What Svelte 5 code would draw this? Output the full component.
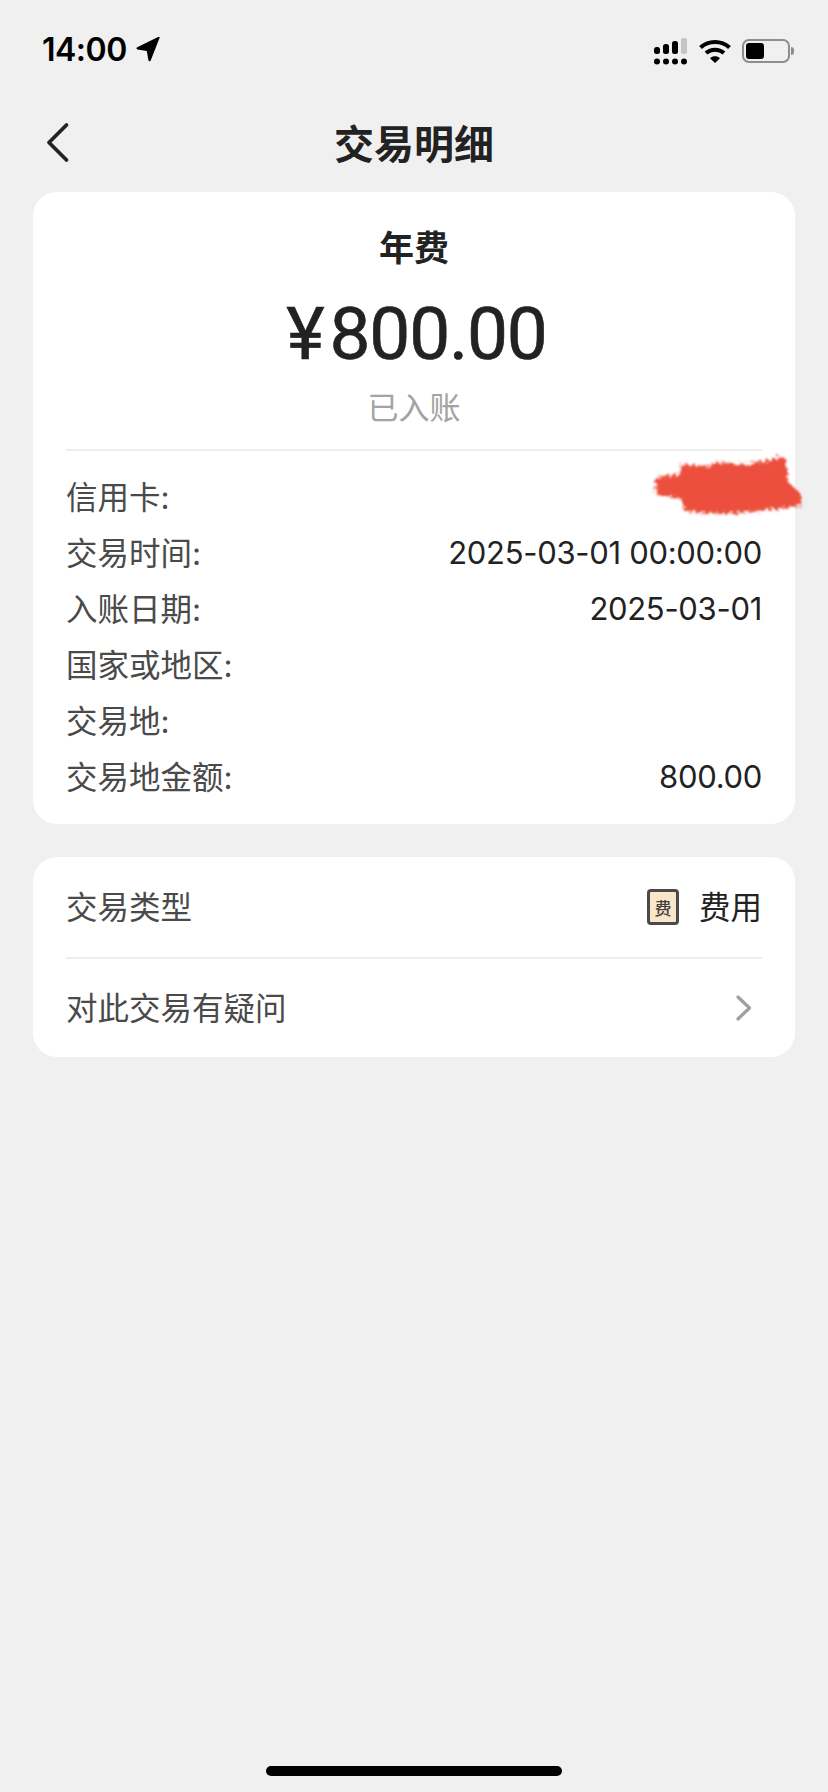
<script>
  const rows = [
    { label: "信用卡:", value: "", masked: true },
    { label: "交易时间:", value: "2025-03-01 00:00:00" },
    { label: "入账日期:", value: "2025-03-01" },
    { label: "国家或地区:", value: "" },
    { label: "交易地:", value: "" },
    { label: "交易地金额:", value: "800.00" },
  ];
</script>

<div class="page">
  <div class="status">
    <div class="time">
      <span>14:00</span>
      <svg class="loc" width="25" height="25" viewBox="0 0 25 25">
        <path d="M23.600.700 14.700 23.400c-.5 1.200-2.100 1-2.300-.2L10.800 14 1.500 12.500C.300 12.300.100 10.800 1.200 10.200L22.300-.1c.9-.4 1.700.000 1.300.800z" fill="#000" />
      </svg>
    </div>
    <div class="status-right">
      <svg width="34" height="27" viewBox="0 0 34 27">
        <rect x="0" y="9" width="6" height="7" rx="2.500" fill="#000" />
        <rect x="9" y="6" width="6" height="10" rx="2.500" fill="#000" />
        <rect x="18" y="3" width="6" height="13" rx="2.500" fill="#000" />
        <rect x="27" y="0" width="6" height="16" rx="2" fill="#c4c4c4" />
        <circle cx="3" cy="23.500" r="3" fill="#000" />
        <circle cx="12" cy="23.500" r="3" fill="#000" />
        <circle cx="21" cy="23.500" r="3" fill="#000" />
        <circle cx="30" cy="23.500" r="3" fill="#000" />
      </svg>
      <svg class="wifi" width="32" height="24" viewBox="0 0 32 24">
        <path d="M1.500 8.500C9.500 1 22.500 1 30.500 8.500" fill="none" stroke="#000" stroke-width="4" />
        <path d="M7 14c5-4.500 13-4.500 18 0" fill="none" stroke="#000" stroke-width="4" />
        <path d="M11 19.200c3-2.500 7-2.500 10 0L16 24z" fill="#000" />
      </svg>
      <div class="battery">
        <div class="battery-body"><div class="battery-fill"></div></div>
        <div class="battery-tip"></div>
      </div>
    </div>
  </div>

  <header class="nav">
    <svg class="back" width="24" height="42" viewBox="0 0 24 42">
      <path d="M20.500 3 3 20.500 20.500 38" fill="none" stroke="#222" stroke-width="3.800" stroke-linecap="round" stroke-linejoin="round" />
    </svg>
    <h1>交易明细</h1>
  </header>

  <section class="card summary">
    <div class="kind">年费</div>
    <div class="amount"><span class="yen">¥</span>800.00</div>
    <div class="state">已入账</div>
    <div class="rows">
      {#each rows as row}
        <div class="row">
          <span class="label">{row.label}</span>
          <span class="value">{row.value}</span>
          {#if row.masked}
            <svg class="scribble" width="160" height="80" viewBox="0 0 160 80">
              <defs>
                <filter id="rough" x="-10%" y="-20%" width="120%" height="140%">
                  <feTurbulence type="fractalNoise" baseFrequency="0.3" numOctaves="3" seed="4" />
                  <feDisplacementMap in="SourceGraphic" scale="10" />
                  <feGaussianBlur stdDeviation="0.8" />
                </filter>
              </defs>
              <path filter="url(#rough)" d="M6 27 L29 25 L33 14 L58 16 L70 12 L90 15 L112 12 L130 7 L137 9 L139 32 L151 43 L152 56 L120 60 L76 64 L36 62 L33 48 L7 45Z" fill="#ec4f3e" />
            </svg>
          {/if}
        </div>
      {/each}
    </div>
  </section>

  <section class="card actions">
    <div class="action">
      <span class="label">交易类型</span>
      <div class="type">
        <span class="type-icon">费</span>
        <span class="type-name">费用</span>
      </div>
    </div>
    <div class="action last">
      <span class="label">对此交易有疑问</span>
      <svg width="16" height="26" viewBox="0 0 16 26">
        <path d="M2 2l11.500 11L2 24" fill="none" stroke="#a0a0a0" stroke-width="3.200" stroke-linecap="round" stroke-linejoin="round" />
      </svg>
    </div>
  </section>

  <div class="spacer">
    <div class="home"></div>
  </div>
</div>

<style>
  :global(body) {
    margin: 0;
    background: #f0f0f0;
  }

  .page {
    width: 828px;
    height: 1792px;
    display: flex;
    flex-direction: column;
    background: #f0f0f0;
    color: #222;
    font-family: Inter, "Noto Sans CJK SC", sans-serif;
    overflow: hidden;
  }

  .status {
    height: 98px;
    display: flex;
    justify-content: space-between;
    align-items: center;
    padding: 0 34px 0 42px;
    flex-shrink: 0;
  }
  .time {
    display: flex;
    align-items: center;
    gap: 9px;
    font-size: 32px;
    font-weight: 600;
    color: #000;
    font-family: Inter, sans-serif;
    letter-spacing: -0.5px;
  }
  .status-right {
    display: flex;
    align-items: center;
    gap: 11px;
    margin-top: 4px;
  }
  .battery {
    display: flex;
    align-items: center;
    gap: 1px;
  }
  .battery-body {
    width: 48px;
    height: 24px;
    box-sizing: border-box;
    border: 2px solid #8e8e8e;
    border-radius: 7px;
    padding: 2px;
  }
  .battery-fill {
    width: 18px;
    height: 100%;
    background: #000;
    border-radius: 3px;
  }
  .battery-tip {
    width: 3px;
    height: 8px;
    background: #8e8e8e;
    border-radius: 0 3px 3px 0;
  }

  .nav {
    height: 94px;
    display: flex;
    align-items: center;
    justify-content: center;
    position: relative;
    flex-shrink: 0;
  }
  .nav h1 {
    margin: 0 0 6px;
    font-size: 40px;
    font-weight: 600;
    color: #222;
  }
  .back {
    position: absolute;
    left: 46px;
    top: 24px;
  }

  .card {
    margin: 0 33px;
    background: #fff;
    border-radius: 24px;
    padding: 0 33px;
    flex-shrink: 0;
  }

  .summary {
    height: 632px;
    box-sizing: border-box;
    display: flex;
    flex-direction: column;
    align-items: center;
    padding-top: 32px;
  }
  .kind {
    font-size: 35px;
    line-height: 48px;
    font-weight: 600;
  }
  .amount {
    font-family: Roboto, sans-serif;
    font-size: 73px;
    line-height: 88px;
    margin: 18px 0 0 5px;
    font-weight: 400;
    letter-spacing: -1.200px;
    -webkit-text-stroke: 0.6px #222;
  }
  .yen {
    margin-right: 6px;
  }
  .state {
    font-size: 31px;
    line-height: 44px;
    margin-top: 8px;
    color: #a3a3a3;
  }
  .rows {
    width: 100%;
    margin-top: 19px;
    padding-top: 16px;
    border-top: 2px solid #eee;
  }
  .row {
    height: 56px;
    display: flex;
    justify-content: space-between;
    align-items: center;
    position: relative;
  }
  .label {
    font-size: 31.5px;
    color: #4a4a4a;
  }
  .value {
    font-size: 31px;
    letter-spacing: -0.3px;
    color: #222;
    margin-top: 2px;
  }
  .scribble {
    position: absolute;
    right: -47px;
    top: -17px;
  }

  .actions {
    margin-top: 33px;
  }
  .action {
    height: 102px;
    display: flex;
    justify-content: space-between;
    align-items: center;
    border-bottom: 2px solid #eee;
    box-sizing: border-box;
  }
  .action .label {
    margin-bottom: 4px;
  }
  .action.last {
    height: 98px;
    border-bottom: none;
  }
  .action svg {
    margin-right: 10px;
  }
  .type {
    display: flex;
    align-items: center;
    gap: 20px;
  }
  .type-icon {
    width: 32px;
    height: 36px;
    box-sizing: border-box;
    border: 3px solid #4a4a4a;
    border-radius: 4px;
    background: #f9e6c9;
    display: flex;
    align-items: center;
    justify-content: center;
    font-size: 17px;
    font-weight: 500;
    color: #444;
  }
  .type-name {
    font-size: 31.5px;
    color: #222;
    margin-bottom: 4px;
  }

  .spacer {
    flex: 1;
    display: flex;
    flex-direction: column;
    justify-content: flex-end;
    align-items: center;
    padding-bottom: 16px;
  }
  .home {
    width: 296px;
    height: 10px;
    border-radius: 5px;
    background: #000;
  }
</style>
